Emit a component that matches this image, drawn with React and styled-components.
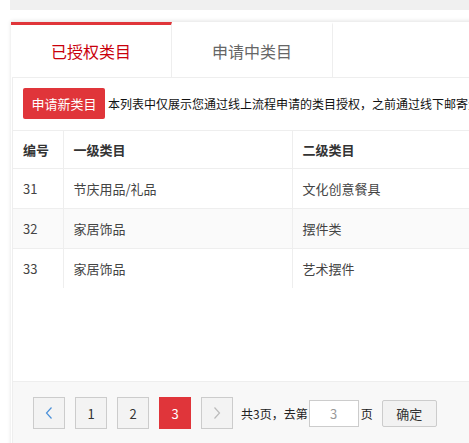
import React from 'react';
import styled, { createGlobalStyle } from 'styled-components';

const GlobalStyle = createGlobalStyle`
    html, body {
        margin: 0;
        padding: 0;
        background: #fff;
        overflow: hidden;
    }
    body {
        font-family: "Noto Sans CJK SC", "Noto Sans", sans-serif;
        color: #333;
    }
`;

const Page = styled.div`
    padding-left: 10px;
    width: 1000px;
`;

const TopBar = styled.div`
    height: 10px;
    background: #f0f0f0;
`;

const Card = styled.div`
    margin: 11px 0 0 1px;
    border-top: 1px solid #eee;
    box-shadow: 0 0 4px rgba(0, 0, 0, 0.12);
    background: #fff;
`;

const TabBar = styled.div`
    display: flex;
`;

const Tab = styled.div`
    width: 160px;
    height: 52px;
    border-top: 3px solid ${p => (p.$active ? '#e0353a' : 'transparent')};
    border-right: 1px solid #eee;
    display: flex;
    align-items: center;
    justify-content: center;
    font-size: 16px;
    color: ${p => (p.$active ? '#c9000b' : '#666')};
    background: #fff;
`;

const Panel = styled.div`
    margin-left: 1px;
    border: 1px solid #eee;
    border-right: none;
    border-bottom: none;
`;

const Toolbar = styled.div`
    display: flex;
    align-items: center;
    padding: 10px 10px 11px;
    white-space: nowrap;
`;

const RedButton = styled.button`
    height: 31px;
    width: 82px;
    padding: 0;
    border: none;
    border-radius: 2px;
    background: #e0353a;
    color: #fff;
    font-family: inherit;
    font-size: 13px;
`;

const Note = styled.span`
    margin-left: 3px;
    font-size: 12px;
    color: #111;
`;

const TableArea = styled.div`
    height: 250px;
    border-top: 1px solid #eee;
`;

const Table = styled.table`
    border-collapse: collapse;
    table-layout: fixed;
    width: 800px;
`;

const Th = styled.th`
    height: 37px;
    padding: 0 0 0 10px;
    text-align: left;
    font-size: 13px;
    font-weight: 700;
    color: #333;
    border-right: 1px solid #eee;
    border-bottom: 1px solid #eee;
`;

const Row = styled.tr`
    background: ${p => (p.$striped ? '#fafafa' : '#fff')};
`;

const Td = styled.td`
    height: 39px;
    padding: 0 0 0 10px;
    font-size: 13px;
    color: #444;
    border-right: 1px solid #eee;
    border-bottom: ${p => (p.$last ? 'none' : '1px solid #eee')};
`;

const Footer = styled.div`
    height: 70px;
    border-top: 1px solid #eee;
    background: #f8f8f8;
    padding: 15px 0 0 20px;
    display: flex;
    align-items: flex-start;
    font-size: 13px;
`;

const Pager = styled.div`
    display: flex;
    align-items: center;
    height: 32px;
    gap: 10px;
`;

const PageBtn = styled.div`
    box-sizing: border-box;
    width: 32px;
    height: 32px;
    display: flex;
    align-items: center;
    justify-content: center;
    font-size: 13px;
    color: ${p => (p.$active ? '#fff' : '#333')};
    background: ${p => (p.$active ? '#e0353a' : '#f3f3f3')};
    border: ${p => (p.$active ? 'none' : '1px solid #ccc')};
`;

const Jump = styled.div`
    display: flex;
    align-items: center;
    height: 32px;
    margin-left: 8px;
    font-size: 12px;
    color: #222;
    white-space: nowrap;
`;

const PageInput = styled.div`
    box-sizing: border-box;
    width: 50px;
    height: 27px;
    margin: 0 2px 0 1px;
    border: 1px solid #ccc;
    background: #fff;
    display: flex;
    align-items: center;
    justify-content: center;
    font-size: 13px;
    color: #999;
`;

const OkButton = styled.div`
    box-sizing: border-box;
    width: 55px;
    height: 27px;
    margin-left: 9px;
    border: 1px solid #ccc;
    border-radius: 2px;
    background: #f2f2f2;
    display: flex;
    align-items: center;
    justify-content: center;
    font-size: 13px;
    color: #333;
`;

const Arrow = ({ dir, color }) => (
    <svg width="10" height="14" viewBox="0 0 10 14">
        <path
            d={dir === 'left' ? 'M7.5 1.5 L2.5 7 L7.5 12.5' : 'M2.5 1.5 L7.5 7 L2.5 12.5'}
            fill="none"
            stroke={color}
            strokeWidth="1.2"
        />
    </svg>
);

const rows = [
    { id: 31, first: '节庆用品/礼品', second: '文化创意餐具' },
    { id: 32, first: '家居饰品', second: '摆件类' },
    { id: 33, first: '家居饰品', second: '艺术摆件' },
];

export default function App() {
    return (
        <Page>
            <GlobalStyle />
            <TopBar />
            <Card>
                <TabBar>
                    <Tab $active>已授权类目</Tab>
                    <Tab>申请中类目</Tab>
                </TabBar>
                <Panel>
                    <Toolbar>
                        <RedButton>申请新类目</RedButton>
                        <Note>本列表中仅展示您通过线上流程申请的类目授权，之前通过线下邮寄资质申请的类目授权暂不在此展示</Note>
                    </Toolbar>
                    <TableArea>
                        <Table>
                            <colgroup>
                                <col style={{ width: 50 }} />
                                <col style={{ width: 229 }} />
                                <col />
                            </colgroup>
                            <thead>
                                <tr>
                                    <Th>编号</Th>
                                    <Th>一级类目</Th>
                                    <Th>二级类目</Th>
                                </tr>
                            </thead>
                            <tbody>
                                {rows.map((r, i) => (
                                    <Row key={r.id} $striped={i % 2 === 1}>
                                        <Td $last={i === rows.length - 1}>{r.id}</Td>
                                        <Td $last={i === rows.length - 1}>{r.first}</Td>
                                        <Td $last={i === rows.length - 1}>{r.second}</Td>
                                    </Row>
                                ))}
                            </tbody>
                        </Table>
                    </TableArea>
                    <Footer>
                        <Pager>
                            <PageBtn><Arrow dir="left" color="#4a90d9" /></PageBtn>
                            <PageBtn>1</PageBtn>
                            <PageBtn>2</PageBtn>
                            <PageBtn $active>3</PageBtn>
                            <PageBtn><Arrow dir="right" color="#bbb" /></PageBtn>
                        </Pager>
                        <Jump>
                            <span>共3页，去第</span>
                            <PageInput>3</PageInput>
                            <span>页</span>
                            <OkButton>确定</OkButton>
                        </Jump>
                    </Footer>
                </Panel>
            </Card>
        </Page>
    );
}
